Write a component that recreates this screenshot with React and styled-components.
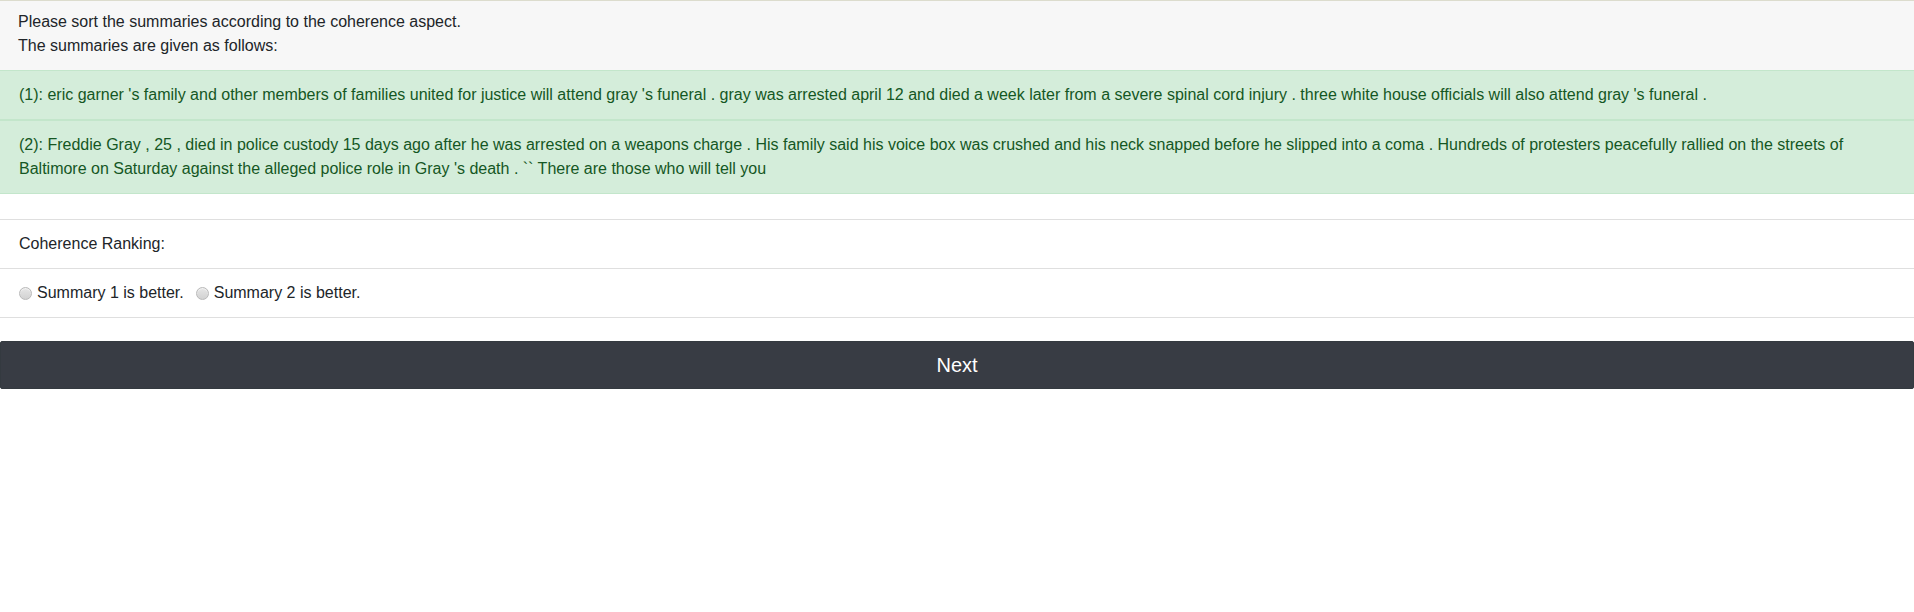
import React, { useState } from 'react';
import styled, { createGlobalStyle } from 'styled-components';

const summaries = [
  "eric garner 's family and other members of families united for justice will attend gray 's funeral . gray was arrested april 12 and died a week later from a severe spinal cord injury . three white house officials will also attend gray 's funeral .",
  "Freddie Gray , 25 , died in police custody 15 days ago after he was arrested on a weapons charge . His family said his voice box was crushed and his neck snapped before he slipped into a coma . Hundreds of protesters peacefully rallied on the streets of Baltimore on Saturday against the alleged police role in Gray 's death . `` There are those who will tell you",
];

const GlobalStyle = createGlobalStyle`
  html, body {
    margin: 0;
    padding: 0;
    background: #fff;
  }
  body {
    font-family: "Liberation Sans", Arial, Helvetica, sans-serif;
    font-size: 16px;
    line-height: 24px;
    color: #212529;
  }
  * {
    box-sizing: border-box;
  }
`;

const Page = styled.div`
  display: flex;
  flex-direction: column;
  width: 100%;
`;

const Instructions = styled.div`
  background: #f7f7f7;
  border-top: 1px solid #dcdccd;
  padding: 9px 18px 12px;
`;

const SummaryList = styled.div`
  display: flex;
  flex-direction: column;
`;

const SummaryItem = styled.div`
  background: #d4edda;
  color: #155724;
  padding: 12px 19px;
  border-top: 1px solid #c3e6cb;
  border-bottom: 1px solid #c3e6cb;
`;

const RankingList = styled.div`
  margin-top: 25px;
  display: flex;
  flex-direction: column;
  border-top: 1px solid #dfdfdf;
`;

const RankingRow = styled.div`
  display: flex;
  align-items: center;
  padding: 12px 19px;
  border-bottom: 1px solid #dfdfdf;
`;

const Option = styled.label`
  display: inline-flex;
  align-items: center;
  margin-right: 12px;
  cursor: pointer;
`;

const Radio = styled.input.attrs({ type: 'radio' })`
  appearance: none;
  -webkit-appearance: none;
  width: 13px;
  height: 13px;
  margin: 0 5px 0 0;
  border-radius: 50%;
  border: 1px solid #b9b9b9;
  background: linear-gradient(#e6e6e6, #d2d2d2);
  box-shadow: inset 0 1px 1px rgba(255, 255, 255, 0.6);
  cursor: pointer;
  &:checked {
    background: radial-gradient(circle, #444 0 3px, #e6e6e6 3.5px);
  }
`;

const NextButton = styled.button`
  margin-top: 23px;
  width: 100%;
  height: 48px;
  border: 1px solid #343a40;
  border-radius: 2px;
  background: #383c44;
  color: #fff;
  font-family: "Liberation Sans", Arial, Helvetica, sans-serif;
  font-size: 20px;
  line-height: 30px;
  cursor: pointer;
`;

export default function App() {
  const [choice, setChoice] = useState(null);
  return (
    <Page>
      <GlobalStyle />
      <Instructions>
        Please sort the summaries according to the coherence aspect.
        <br />
        The summaries are given as follows:
      </Instructions>
      <SummaryList>
        {summaries.map((text, i) => (
          <SummaryItem key={i}>{`(${i + 1}): ${text}`}</SummaryItem>
        ))}
      </SummaryList>
      <RankingList>
        <RankingRow>Coherence Ranking:</RankingRow>
        <RankingRow>
          {[1, 2].map((n) => (
            <Option key={n}>
              <Radio name="coherence" checked={choice === n} onChange={() => setChoice(n)} />
              {`Summary ${n} is better.`}
            </Option>
          ))}
        </RankingRow>
      </RankingList>
      <NextButton>Next</NextButton>
    </Page>
  );
}
